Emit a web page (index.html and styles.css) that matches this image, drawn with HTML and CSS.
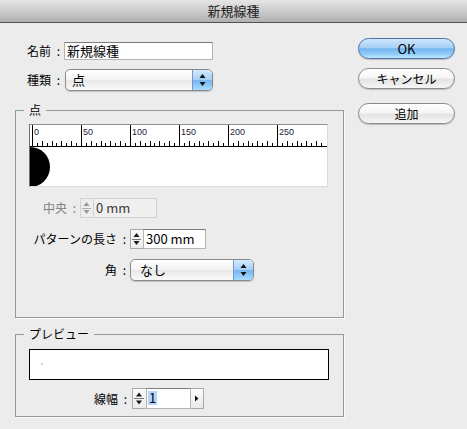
FILE: index.html
```html
<!DOCTYPE html>
<html lang="ja">
<head>
<meta charset="utf-8">
<title>新規線種</title>
<link rel="stylesheet" href="styles.css">
</head>
<body>
<div class="window">
  <header class="titlebar">新規線種</header>
  <div class="content">
    <div class="main">
      <div class="row row-name">
        <span class="label">名前 :</span>
        <div class="field field-name">新規線種</div>
      </div>
      <div class="row row-type">
        <span class="label">種類 :</span>
        <div class="popup popup-type">
          <span class="popup-text">点</span>
          <span class="popup-arrows"><svg width="19" height="20" viewBox="0 0 19 20"><path d="M6.5,8 L12.5,8 L9.5,4 Z M6.5,12 L12.5,12 L9.5,16 Z" fill="#111"/></svg></span>
        </div>
      </div>

      <fieldset class="group group-dot">
        <legend>点</legend>
        <div class="ruler">
          <svg width="297" height="61" viewBox="0 0 297 61">
            <path d="M0,21.5H297" stroke="#000" stroke-width="1"/>
            <path d="M2.5,0V21M51.5,0V21M100.5,0V21M149.5,0V21M198.5,0V21M247.5,0V21" stroke="#000" stroke-width="1"/>
            <path d="M12.5,16V21M22.5,16V21M31.5,16V21M41.5,16V21M61.5,16V21M71.5,16V21M80.5,16V21M90.5,16V21M110.5,16V21M120.5,16V21M129.5,16V21M139.5,16V21M159.5,16V21M169.5,16V21M178.5,16V21M188.5,16V21M208.5,16V21M218.5,16V21M227.5,16V21M237.5,16V21M257.5,16V21M267.5,16V21M276.5,16V21M286.5,16V21" stroke="#000" stroke-width="1"/>
            <path d="M7.5,18V21M17.5,18V21M26.5,18V21M36.5,18V21M46.5,18V21M56.5,18V21M66.5,18V21M75.5,18V21M85.5,18V21M95.5,18V21M105.5,18V21M115.5,18V21M124.5,18V21M134.5,18V21M144.5,18V21M154.5,18V21M164.5,18V21M173.5,18V21M183.5,18V21M193.5,18V21M203.5,18V21M213.5,18V21M222.5,18V21M232.5,18V21M242.5,18V21M252.5,18V21M262.5,18V21M271.5,18V21M281.5,18V21M291.5,18V21" stroke="#000" stroke-width="1"/>
            <g class="ruler-num">
              <text x="4" y="10">0</text>
              <text x="53" y="10">50</text>
              <text x="102" y="10">100</text>
              <text x="151" y="10">150</text>
              <text x="200" y="10">200</text>
              <text x="249" y="10">250</text>
            </g>
            <path d="M0,22 A20,20 0 0 1 0,62 Z" fill="#000"/>
          </svg>
        </div>

        <div class="row row-center disabled">
          <span class="label">中央 :</span>
          <span class="spinner"><svg width="11" height="18" viewBox="0 0 11 18"><path d="M2.5,7 L8.5,7 L5.5,3 Z M2.5,11 L8.5,11 L5.5,15 Z" fill="#9a9a9a"/><path d="M1,9.5H10" stroke="#b0b0b0"/></svg></span>
          <div class="field field-center">0 mm</div>
        </div>

        <div class="row row-pattern">
          <span class="label">パターンの長さ :</span>
          <span class="spinner"><svg width="11" height="18" viewBox="0 0 11 18"><path d="M2.5,7 L8.5,7 L5.5,3 Z M2.5,11 L8.5,11 L5.5,15 Z" fill="#1a1a1a"/><path d="M1,9.5H10" stroke="#777"/></svg></span>
          <div class="field field-pattern">300 mm</div>
        </div>

        <div class="row row-corner">
          <span class="label">角 :</span>
          <div class="popup popup-corner">
            <span class="popup-text">なし</span>
            <span class="popup-arrows"><svg width="19" height="20" viewBox="0 0 19 20"><path d="M6.5,8 L12.5,8 L9.5,4 Z M6.5,12 L12.5,12 L9.5,16 Z" fill="#111"/></svg></span>
          </div>
        </div>
      </fieldset>

      <fieldset class="group group-preview">
        <legend>プレビュー</legend>
        <div class="preview"><span class="preview-dot"></span></div>
        <div class="row row-weight">
          <span class="label">線幅 :</span>
          <span class="spinner"><svg width="12" height="19" viewBox="0 0 12 19"><path d="M3,7.5 L9,7.5 L6,3.5 Z M3,11.5 L9,11.5 L6,15.5 Z" fill="#1a1a1a"/><path d="M1,9.5H11" stroke="#777"/></svg></span>
          <div class="field field-weight"><span class="selection">1</span></div>
          <span class="step-btn"><svg width="11" height="19" viewBox="0 0 11 19"><path d="M4,6.5 L7.5,9.5 L4,12.5 Z" fill="#111"/></svg></span>
        </div>
      </fieldset>
    </div>

    <div class="buttons">
      <button class="btn btn-primary">OK</button>
      <button class="btn btn-cancel">キャンセル</button>
      <button class="btn btn-add">追加</button>
    </div>
  </div>
</div>
</body>
</html>
```

FILE: styles.css
```css
html, body {
  margin: 0;
  padding: 0;
}

body {
  background: #ececec;
  font-family: "Noto Sans CJK JP", "Liberation Sans", sans-serif;
  font-size: 12px;
  color: #000;
}

.window {
  width: 467px;
  height: 429px;
  overflow: hidden;
}

.titlebar {
  height: 22px;
  line-height: 22px;
  text-align: center;
  font-size: 13px;
  color: #1e1e1e;
  background: linear-gradient(#e6e6e6, #b0b0b0);
  border-bottom: 1px solid #515151;
}

.content {
  display: flex;
  align-items: flex-start;
}

.main {
  margin-left: 15px;
  width: 329px;
  padding-top: 19px;
}

.buttons {
  margin-left: 14px;
  width: 97px;
  padding-top: 15px;
  display: flex;
  flex-direction: column;
}

.row {
  display: flex;
  align-items: center;
}

.label {
  flex: none;
  text-align: right;
  line-height: 16px;
  white-space: nowrap;
  word-spacing: 3px;
}

.field {
  box-sizing: border-box;
  height: 100%;
  background: #fff;
  border: 1px solid #b4b4b4;
  border-top-color: #7c7c7c;
  font-size: 13px;
  line-height: 17px;
  padding: 0 2px;
  white-space: nowrap;
}

/* name / type rows */
.row-name {
  height: 18px;
}

.row-name .label {
  width: 45px;
  margin-right: 4px;
}

.field-name {
  width: 149px;
  line-height: 16px;
}

.row-type {
  margin-top: 9px;
  height: 22px;
}

.row-type .label {
  width: 45px;
  margin-right: 5px;
}

/* popup */
.popup {
  box-sizing: border-box;
  height: 22px;
  border: 1px solid #8a8a8a;
  border-radius: 5px;
  display: flex;
  overflow: hidden;
  background: linear-gradient(#ffffff, #f3f3f3 50%, #e8e8e8 51%, #f8f8f8);
  box-shadow: 0 1px 1px rgba(0, 0, 0, 0.18);
}

.popup-type {
  width: 148px;
}

.popup-corner {
  width: 124px;
}

.popup-text {
  flex: 1;
  padding-left: 6px;
  font-size: 13px;
  line-height: 20px;
}

.popup-corner .popup-text {
  padding-left: 9px;
}

.popup-arrows {
  width: 19px;
  border-left: 1px solid #7d98c0;
  background: linear-gradient(#d4eafd, #a4d0f7 48%, #74b7f3 52%, #a8dbff);
  display: flex;
}

/* group boxes */
.group {
  box-sizing: border-box;
  width: 329px;
  margin: 0;
  padding: 0;
  min-width: 0;
  border: 1px solid #979797;
  box-shadow: 1px 1px 0 #fbfbfb;
}

.group legend {
  margin-left: 8px;
  padding: 0 5px;
  font-size: 12px;
  line-height: 16px;
}

.group-dot {
  margin-top: 11px;
  padding-bottom: 36px;
}

.group-preview {
  margin-top: 8px;
  padding-bottom: 7px;
}

/* ruler */
.ruler {
  box-sizing: border-box;
  margin: 6px 0 0 13px;
  width: 299px;
  height: 63px;
  background: #fff;
  border: 1px solid #dadada;
  border-top-color: #8e8e8e;
  border-left-color: #707070;
}

.ruler svg {
  display: block;
}

.ruler-num text {
  font-family: "Liberation Sans", sans-serif;
  font-size: 9px;
  fill: #1c1c3c;
}

/* spinner rows */
.spinner {
  flex: none;
  box-sizing: border-box;
  width: 13px;
  height: 100%;
  border: 1px solid #a8a8a8;
  border-right: 0;
  background: linear-gradient(#fafafa, #ececec);
}

.spinner svg {
  display: block;
}

.row-center {
  margin-top: 11px;
  height: 20px;
}

.row-center .label {
  width: 60px;
  margin-right: 4px;
}

.disabled .label {
  color: #808080;
}

.disabled .spinner {
  border-color: #d2d2d2;
  background: #eeeeee;
}

.field-center {
  width: 64px;
  background: #efefef;
  border-color: #d2d2d2;
  color: #3a3a3a;
}

.row-pattern {
  margin-top: 11px;
  height: 20px;
}

.row-pattern .label {
  width: 110px;
  margin-right: 4px;
}

.field-pattern {
  width: 63px;
}

.row-corner {
  margin-top: 10px;
  height: 22px;
}

.row-corner .label {
  width: 110px;
  margin-right: 4px;
}

/* preview */
.preview {
  box-sizing: border-box;
  margin: 7px 0 0 13px;
  width: 300px;
  height: 31px;
  border: 1px solid #000;
  background: #fff;
}

.preview-dot {
  display: block;
  width: 2px;
  height: 2px;
  margin: 13px 0 0 11px;
  background: #cfcfcf;
}

.row-weight {
  margin-top: 8px;
  height: 21px;
}

.row-weight .label {
  width: 111px;
  margin-right: 5px;
}

.row-weight .spinner {
  width: 14px;
}

.field-weight {
  width: 45px;
  padding-left: 1px;
  line-height: 17px;
}

.selection {
  display: inline-block;
  padding: 0 1px;
  background: #b5d5ff;
  line-height: 14px;
}

.step-btn {
  flex: none;
  box-sizing: border-box;
  width: 13px;
  height: 100%;
  border: 1px solid #a8a8a8;
  border-left: 0;
  background: linear-gradient(#fbfbfb, #e9e9e9);
}

.step-btn svg {
  display: block;
}

/* buttons */
.btn {
  box-sizing: border-box;
  width: 97px;
  height: 21px;
  padding: 0;
  border: 1px solid #8a8a8a;
  border-radius: 11px;
  font-family: "Noto Sans CJK JP", "Liberation Sans", sans-serif;
  font-size: 12px;
  line-height: 19px;
  color: #000;
  text-align: center;
  background: linear-gradient(#ffffff 0%, #f6f6f6 45%, #e4e4e4 55%, #f6f6f6 100%);
  box-shadow: 0 1px 1px rgba(0, 0, 0, 0.2);
}

.btn-primary {
  font-size: 13px;
  border-color: #4d74aa;
  background: linear-gradient(#cfe6fb 0%, #a6d0f6 45%, #74b5f0 52%, #92ccf9 80%, #c2e8ff 100%);
}

.btn-cancel {
  margin-top: 9px;
}

.btn-add {
  margin-top: 14px;
}
```
